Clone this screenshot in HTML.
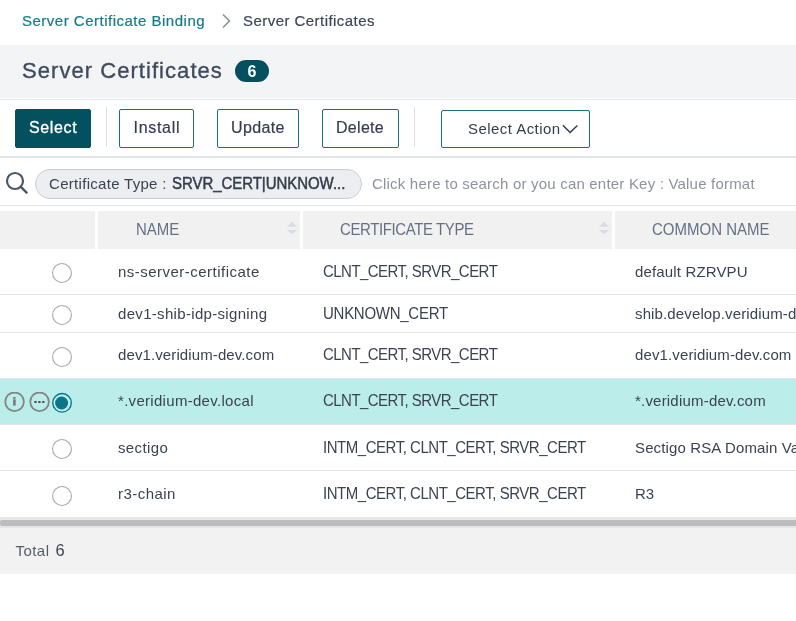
<!DOCTYPE html>
<html><head><meta charset="utf-8">
<style>
*{box-sizing:border-box;margin:0;padding:0}
html,body{width:796px;height:621px;overflow:hidden;background:#fff;font-family:"Liberation Sans",sans-serif;color:#3b4352}
.a{position:absolute;white-space:nowrap}
#root{position:absolute;left:0;top:0;width:796px;height:621px;will-change:transform}
.t15{font-size:15px;line-height:18px}
.btn{position:absolute;top:109px;height:39px;border:1px solid #1c6f7d;border-radius:2px;background:#fff}
.btn.pri{background:#03505e;border-color:#03505e}
.btxt{position:absolute;font-size:16px;line-height:18px;white-space:nowrap;color:#333d4e;-webkit-text-stroke:0.2px #333d4e}
.sep{position:absolute;top:107px;width:1px;height:40px;background:#dcdfe3}
.line{position:absolute;left:0;width:796px;height:1px;background:#e1e4e8}
.th{position:absolute;top:211px;height:38px;background:#f1f1f1}
.tht{position:absolute;top:221px;transform:scaleY(1.05);transform-origin:0 14.2px;font-size:15px;line-height:18px;color:#667085;white-space:nowrap}
.cell{position:absolute;font-size:15px;line-height:18px;white-space:nowrap;color:#3b4352}
.c1{left:118px}.c2{left:323px;transform:scaleY(1.05);transform-origin:0 14.2px}.c3{left:635px}
.radio{position:absolute;left:52px;width:20px;height:20px;border:1px solid #a6a6a6;border-radius:50%;background:#fff}
.radio.sel{border:2px solid #0b7689;background:transparent}
.radio.sel:after{content:"";position:absolute;left:1.5px;top:1.5px;width:13px;height:13px;border-radius:50%;background:#0b7689}
</style></head><body><div id="root">
<div class="a t15" style="left:22px;top:11.5px;color:#157a8b;-webkit-text-stroke:0.2px #157a8b;letter-spacing:0.50px">Server Certificate Binding</div>
<svg class="a" style="left:221px;top:13px" width="11" height="16" viewBox="0 0 11 16"><path d="M2 1.5 L8.5 8 L2 14.5" fill="none" stroke="#8a9099" stroke-width="1.6"/></svg>
<div class="a t15" style="left:243px;top:11.5px;color:#3d4655;-webkit-text-stroke:0.2px #3d4655;letter-spacing:0.45px">Server Certificates</div>
<div class="a" style="left:0;top:45px;width:796px;height:53px;background:#f3f4f6"></div>
<div class="line" style="top:99px"></div>
<div class="a" style="left:22px;top:58px;font-size:22px;line-height:26px;color:#404a5d;-webkit-text-stroke:0.35px #404a5d;letter-spacing:1.05px">Server Certificates</div>
<div class="a" style="left:235px;top:60px;width:34px;height:22px;border-radius:11px;background:#04505e;color:#fff;font-weight:bold;font-size:16px;line-height:23px;text-align:center">6</div>
<div class="btn pri" style="left:15px;width:76px"></div>
<div class="btxt" style="left:29px;top:118.5px;color:#fff;letter-spacing:0.65px;-webkit-text-stroke:0.3px #fff">Select</div>
<div class="sep" style="left:106px"></div>
<div class="btn" style="left:119px;width:75px"></div>
<div class="btxt" style="left:133.5px;top:118.5px;letter-spacing:0.7px">Install</div>
<div class="btn" style="left:217px;width:82px"></div>
<div class="btxt" style="left:231px;top:118.5px;letter-spacing:0.35px">Update</div>
<div class="btn" style="left:322px;width:77px"></div>
<div class="btxt" style="left:336px;top:118.5px;letter-spacing:0.3px">Delete</div>
<div class="sep" style="left:414px"></div>
<div class="btn" style="left:441px;top:110px;width:149px;height:38px"></div>
<div class="btxt" style="left:468px;top:120px;font-size:15px;letter-spacing:0.45px;-webkit-text-stroke:0">Select Action</div>
<svg class="a" style="left:560px;top:122px" width="20" height="14" viewBox="0 0 20 14"><path d="M2.9 3.2 L10.1 10.5 L17.4 3.5" fill="none" stroke="#2d3b57" stroke-width="1.5"/></svg>
<div class="a" style="left:0;top:156px;width:796px;height:2px;background:#e1e4e8"></div>
<svg class="a" style="left:5px;top:171px" width="24" height="24" viewBox="0 0 24 24"><circle cx="10" cy="10" r="8" fill="none" stroke="#4b5669" stroke-width="2.2"/><path d="M15.8 15.8 L21.6 21.6" stroke="#4b5669" stroke-width="2.4" stroke-linecap="round"/></svg>
<div class="a" style="left:35px;top:169px;width:327px;height:30px;border:1px solid #c9cdd3;border-radius:15px;background:#eceef1"></div>
<div class="a t15" style="left:49px;top:175px;color:#3b4352;letter-spacing:0.3px">Certificate Type :</div>
<div class="a t15" style="left:172px;top:175px;color:#353c4a;-webkit-text-stroke:0.45px #353c4a;transform:scaleY(1.05);transform-origin:0 14.2px;letter-spacing:-0.05px">SRVR_CERT|UNKNOW...</div>
<div class="a t15" style="left:372px;top:175px;color:#8e939b;letter-spacing:0.2px">Click here to search or you can enter Key : Value format</div>
<div class="line" style="top:205px"></div>
<div class="th" style="left:0;width:95px"></div>
<div class="th" style="left:98px;width:202px"></div>
<div class="th" style="left:303px;width:309px"></div>
<div class="th" style="left:615px;width:181px"></div>
<div class="tht" style="left:136px">NAME</div>
<div class="tht" style="left:340px;letter-spacing:-0.4px">CERTIFICATE TYPE</div>
<div class="tht" style="left:652px">COMMON NAME</div>
<svg class="a" style="left:287px;top:221px" width="10" height="14" viewBox="0 0 10 14"><path d="M5 0.5 L10 5.7 L0 5.7Z M0 9 L10 9 L5 13.2Z" fill="#d9dce1"/></svg>
<svg class="a" style="left:599px;top:221px" width="10" height="14" viewBox="0 0 10 14"><path d="M5 0.5 L10 5.7 L0 5.7Z M0 9 L10 9 L5 13.2Z" fill="#d9dce1"/></svg>
<div class="line" style="top:294px"></div>
<div class="line" style="top:332px"></div>
<div class="line" style="top:378px"></div>
<div class="line" style="top:424px"></div>
<div class="line" style="top:470px"></div>
<svg class="a" style="left:52px;top:263px" width="20" height="20" viewBox="0 0 20 20"><circle cx="10" cy="10" r="9.45" fill="#fff" stroke="#a9a9a9" stroke-width="1.1"/></svg>
<div class="cell c1" style="top:263px;letter-spacing:0.48px">ns-server-certificate</div>
<div class="cell c2" style="top:263px;letter-spacing:-0.54px">CLNT_CERT, SRVR_CERT</div>
<div class="cell c3" style="top:263px;letter-spacing:0.15px">default RZRVPU</div>
<svg class="a" style="left:52px;top:305px" width="20" height="20" viewBox="0 0 20 20"><circle cx="10" cy="10" r="9.45" fill="#fff" stroke="#a9a9a9" stroke-width="1.1"/></svg>
<div class="cell c1" style="top:305px;letter-spacing:0.32px">dev1-shib-idp-signing</div>
<div class="cell c2" style="top:305px;letter-spacing:-0.27px">UNKNOWN_CERT</div>
<div class="cell c3" style="top:305px;letter-spacing:0.13px">shib.develop.veridium-dev.com</div>
<svg class="a" style="left:52px;top:347px" width="20" height="20" viewBox="0 0 20 20"><circle cx="10" cy="10" r="9.45" fill="#fff" stroke="#a9a9a9" stroke-width="1.1"/></svg>
<div class="cell c1" style="top:346px;letter-spacing:0.11px">dev1.veridium-dev.com</div>
<div class="cell c2" style="top:346px;letter-spacing:-0.54px">CLNT_CERT, SRVR_CERT</div>
<div class="cell c3" style="top:346px;letter-spacing:0.12px">dev1.veridium-dev.com</div>
<div class="a" style="left:0;top:379px;width:796px;height:45px;background:#bbeeea"></div>
<svg class="a" style="left:4px;top:392px" width="21" height="21" viewBox="0 0 21 21"><circle cx="10.55" cy="9.8" r="9.3" fill="none" stroke="#858585" stroke-width="1.8"/><rect x="9.1" y="5.1" width="2.6" height="1.6" fill="#7a7a7a"/><rect x="9.1" y="7.3" width="2.6" height="6.3" fill="#7a7a7a"/></svg>
<svg class="a" style="left:29px;top:392px" width="21" height="21" viewBox="0 0 21 21"><circle cx="10.55" cy="9.8" r="9.3" fill="none" stroke="#858585" stroke-width="1.8"/><rect x="5.3" y="8.9" width="2.4" height="2.2" rx="0.5" fill="#505050"/><rect x="9.2" y="8.9" width="2.4" height="2.2" rx="0.5" fill="#505050"/><rect x="13.1" y="8.9" width="2.4" height="2.2" rx="0.5" fill="#505050"/></svg>
<svg class="a" style="left:52px;top:392px" width="21" height="22" viewBox="0 0 21 22"><circle cx="10.05" cy="10.8" r="9.3" fill="none" stroke="#0a7589" stroke-width="1.35"/><circle cx="9.6" cy="11" r="6.5" fill="#0a7589"/></svg>
<div class="cell c1" style="top:392px;letter-spacing:0.3px">*.veridium-dev.local</div>
<div class="cell c2" style="top:392px;letter-spacing:-0.54px">CLNT_CERT, SRVR_CERT</div>
<div class="cell c3" style="top:392px;letter-spacing:0.2px">*.veridium-dev.com</div>
<svg class="a" style="left:52px;top:439px" width="20" height="20" viewBox="0 0 20 20"><circle cx="10" cy="10" r="9.45" fill="#fff" stroke="#a9a9a9" stroke-width="1.1"/></svg>
<div class="cell c1" style="top:439px;letter-spacing:0.37px">sectigo</div>
<div class="cell c2" style="top:439px;letter-spacing:-0.47px">INTM_CERT, CLNT_CERT, SRVR_CERT</div>
<div class="cell c3" style="top:439px;letter-spacing:0.13px">Sectigo RSA Domain Validation</div>
<svg class="a" style="left:52px;top:486px" width="20" height="20" viewBox="0 0 20 20"><circle cx="10" cy="10" r="9.45" fill="#fff" stroke="#a9a9a9" stroke-width="1.1"/></svg>
<div class="cell c1" style="top:485px;letter-spacing:0.45px">r3-chain</div>
<div class="cell c2" style="top:485px;letter-spacing:-0.47px">INTM_CERT, CLNT_CERT, SRVR_CERT</div>
<div class="cell c3" style="top:485px;letter-spacing:0.0px">R3</div>
<div class="a" style="left:0;top:517px;width:796px;height:11px;background:#e4e6e9"></div>
<div class="a" style="left:0px;top:520px;width:800px;height:6px;border-radius:2px;background:#bdbdbd"></div>
<div class="a" style="left:0;top:528px;width:796px;height:46px;background:#f2f2f2"></div>
<div class="a t15" style="left:15.5px;top:542px;color:#545c6a;letter-spacing:0.45px">Total</div>
<div class="a" style="left:55.5px;top:541px;font-size:16.5px;line-height:18px;color:#3b4352">6</div>
</div></body></html>
